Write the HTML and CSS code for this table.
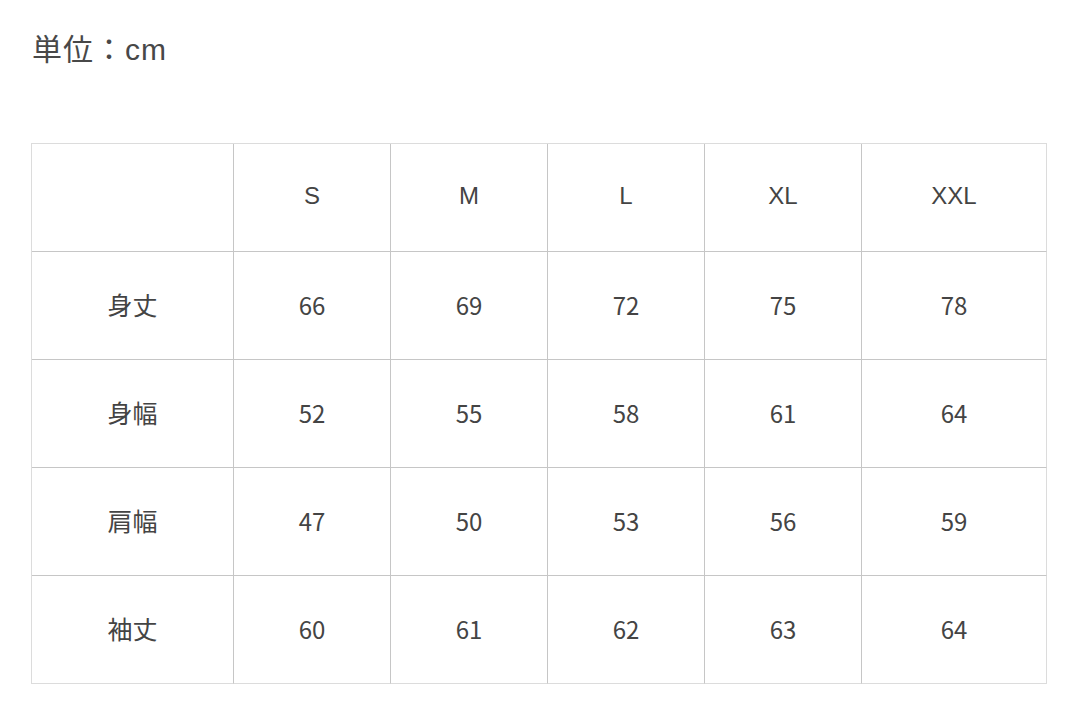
FILE: index.html
```html
<!DOCTYPE html>
<html lang="ja">
<head>
<meta charset="utf-8">
<title>サイズ表</title>
<link rel="stylesheet" href="styles.css">
</head>
<body>
<main class="page">
  <p class="unit">単位：cm</p>
  <table class="size-table">
    <colgroup>
      <col class="col-label">
      <col class="col-size">
      <col class="col-size">
      <col class="col-size">
      <col class="col-size">
      <col class="col-last">
    </colgroup>
    <thead>
      <tr>
        <th></th>
        <th>S</th>
        <th>M</th>
        <th>L</th>
        <th>XL</th>
        <th>XXL</th>
      </tr>
    </thead>
    <tbody>
      <tr>
        <th>身丈</th>
        <td>66</td><td>69</td><td>72</td><td>75</td><td>78</td>
      </tr>
      <tr>
        <th>身幅</th>
        <td>52</td><td>55</td><td>58</td><td>61</td><td>64</td>
      </tr>
      <tr>
        <th>肩幅</th>
        <td>47</td><td>50</td><td>53</td><td>56</td><td>59</td>
      </tr>
      <tr>
        <th>袖丈</th>
        <td>60</td><td>61</td><td>62</td><td>63</td><td>64</td>
      </tr>
    </tbody>
  </table>
</main>
</body>
</html>
```

FILE: styles.css
```css
html, body {
  margin: 0;
  padding: 0;
  background: #ffffff;
}

body {
  font-family: "Noto Sans CJK JP", "Noto Sans", sans-serif;
  color: #444444;
}

.page {
  padding: 28px 0 0 32px;
}

.unit {
  margin: 0;
  font-family: "Liberation Sans", "Noto Sans CJK JP", sans-serif;
  font-size: 30px;
  line-height: 44px;
  letter-spacing: 1px;
  color: #484848;
}

.size-table {
  margin-top: 71px;
  margin-left: -1px;
  width: 1015px;
  border-collapse: separate;
  border-spacing: 0;
  table-layout: fixed;
  border-top: 1px solid #dcdcdc;
  border-left: 1px solid #dcdcdc;
}

.col-label { width: 202px; }
.col-size { width: 157px; }
.col-last { width: 185px; }

.size-table th,
.size-table td {
  height: 104px;
  padding: 0 0 3px;
  text-align: center;
  vertical-align: middle;
  font-size: 24px;
  font-weight: 400;
  color: #444444;
  border-right: 1px solid #c6c6c6;
  border-bottom: 1px solid #c6c6c6;
}

.size-table thead th {
  font-family: "Liberation Sans", "Noto Sans CJK JP", sans-serif;
}

.size-table tr > :last-child {
  border-right-color: #dcdcdc;
}

.size-table tbody tr:last-child > * {
  border-bottom-color: #dcdcdc;
}

.size-table tbody th {
  font-size: 25px;
}
```
